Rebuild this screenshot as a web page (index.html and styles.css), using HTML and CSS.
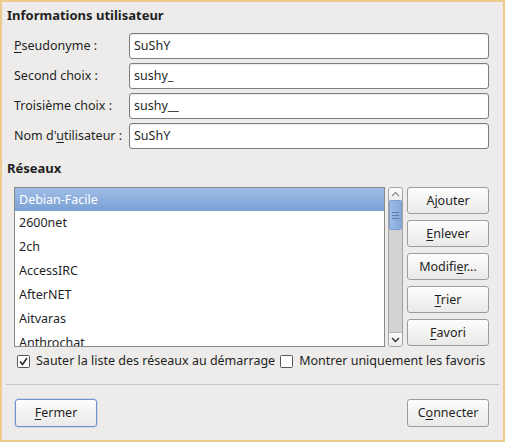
FILE: index.html
```html
<!DOCTYPE html>
<html lang="fr">
<head>
<meta charset="utf-8">
<title>Réseaux</title>
<link rel="stylesheet" href="styles.css">
</head>
<body>
<div class="window">
  <div class="heading">Informations utilisateur</div>
  <div class="form">
    <label class="lbl"><u>P</u>seudonyme :</label>
    <div class="input">SuShY</div>
    <label class="lbl">Second choix :</label>
    <div class="input">sushy_</div>
    <label class="lbl">Troisième choix :</label>
    <div class="input">sushy__</div>
    <label class="lbl">Nom d'<u>u</u>tilisateur :</label>
    <div class="input">SuShY</div>
  </div>

  <div class="heading heading2">Réseaux</div>
  <div class="networks">
    <div class="list">
      <div class="item selected">Debian-Facile</div>
      <div class="item">2600net</div>
      <div class="item">2ch</div>
      <div class="item">AccessIRC</div>
      <div class="item">AfterNET</div>
      <div class="item">Aitvaras</div>
      <div class="item">Anthrochat</div>
    </div>
    <div class="scrollbar">
      <div class="sb-btn sb-up">
        <svg width="9" height="6" viewBox="0 0 9 6"><path d="M1 5 L4.5 1.5 L8 5" fill="none" stroke="#8a8a8a" stroke-width="1.2"/></svg>
      </div>
      <div class="sb-track">
        <div class="sb-thumb">
          <span class="grip"></span><span class="grip"></span><span class="grip"></span>
        </div>
      </div>
      <div class="sb-btn sb-down">
        <svg width="9" height="6" viewBox="0 0 9 6"><path d="M1 1 L4.5 4.5 L8 1" fill="none" stroke="#333" stroke-width="1.4"/></svg>
      </div>
    </div>
    <div class="side-buttons">
      <div class="btn">A<u>j</u>outer</div>
      <div class="btn"><u>E</u>nlever</div>
      <div class="btn">Modifi<u>e</u>r...</div>
      <div class="btn"><u>T</u>rier</div>
      <div class="btn"><u>F</u>avori</div>
    </div>
  </div>

  <div class="checks">
    <span class="check">
      <svg width="13" height="13" viewBox="0 0 13 13"><rect x="0.5" y="0.5" width="12" height="12" rx="1" fill="#fff" stroke="#555"/><path d="M3 6.5 L5.5 9.5 L10 3" fill="none" stroke="#222" stroke-width="1.5"/></svg>
      Sauter la liste des réseaux au démarrage
    </span>
    <span class="check">
      <svg width="13" height="13" viewBox="0 0 13 13"><rect x="0.5" y="0.5" width="12" height="12" rx="1" fill="#fff" stroke="#555"/></svg>
      Montrer uniquement les favoris
    </span>
  </div>

  <div class="separator"></div>

  <div class="footer">
    <div class="btn btn-focus"><u>F</u>ermer</div>
    <div class="btn">C<u>o</u>nnecter</div>
  </div>
</div>
</body>
</html>
```

FILE: styles.css
```css
html, body {
  margin: 0;
  padding: 0;
}

body {
  font-family: "Noto Sans", "DejaVu Sans", sans-serif;
  font-size: 12.5px;
  color: #1f1f1f;
  background: #eccb8d;
}

.window {
  width: 505px;
  height: 442px;
  box-sizing: border-box;
  border: 2px solid #eccb8d;
  background: #edecea;
  padding: 4px 14px 0 5px;
  display: flex;
  flex-direction: column;
}

u {
  text-decoration: underline;
  text-underline-offset: 2px;
}

.heading {
  font-weight: bold;
  font-size: 13px;
  line-height: 18px;
  height: 18px;
}

.form {
  margin: 9px 0 0 7px;
  display: grid;
  grid-template-columns: 115px 1fr;
  grid-auto-rows: 26px;
  row-gap: 4px;
}

.lbl {
  line-height: 26px;
  white-space: nowrap;
}

.input {
  box-sizing: border-box;
  height: 26px;
  border: 1px solid #7d7d7d;
  border-radius: 3px;
  background: #fff;
  padding: 0 4px;
  line-height: 24px;
  box-shadow: inset 0 1px 1px rgba(0,0,0,0.08);
}

.heading2 {
  margin-top: 10px;
}

.networks {
  margin: 10px 0 0 7px;
  display: flex;
  height: 160px;
}

.list {
  flex: 1;
  box-sizing: border-box;
  border: 1px solid #8a8a8a;
  background: #fff;
  overflow: hidden;
}

.item {
  height: 24px;
  line-height: 24px;
  padding-left: 4px;
  white-space: nowrap;
}

.item.selected {
  height: 23px;
  line-height: 23px;
  background: linear-gradient(#a0bde6, #7ba0d5);
  color: #fff;
}

.scrollbar {
  width: 15px;
  margin-left: 3px;
  box-sizing: border-box;
  border: 1px solid #a5a5a5;
  border-radius: 3px;
  display: flex;
  flex-direction: column;
  overflow: hidden;
  background: #d3d3d3;
}

.sb-btn {
  display: flex;
  align-items: center;
  justify-content: center;
  background: linear-gradient(#fbfbfb, #ececec);
}

.sb-up {
  height: 12px;
}

.sb-down {
  height: 13px;
  border-top: 1px solid #b5b5b5;
}

.sb-track {
  flex: 1;
  background: #d3d3d3;
}

.sb-thumb {
  height: 30px;
  box-sizing: border-box;
  border: 1px solid #7c9fd0;
  border-radius: 2px;
  background: linear-gradient(to right, #9dbbe5, #86a9dc);
  display: flex;
  flex-direction: column;
  align-items: center;
  justify-content: center;
  gap: 2px;
}

.grip {
  width: 7px;
  height: 1px;
  background: #5e7fae;
}

.side-buttons {
  width: 82px;
  margin-left: 4px;
  display: flex;
  flex-direction: column;
  gap: 6px;
}

.btn {
  box-sizing: border-box;
  height: 27px;
  width: 82px;
  border: 1px solid #9c9c9c;
  border-radius: 3px;
  background: linear-gradient(#fdfdfd, #e9e9e8);
  text-align: center;
  line-height: 25px;
  white-space: nowrap;
}

.checks {
  margin: 5px 0 0 10px;
  display: flex;
  gap: 5px;
  line-height: 18px;
  white-space: nowrap;
}

.check {
  display: flex;
  align-items: center;
  gap: 6px;
}

.separator {
  height: 1px;
  background: #c6c5c3;
  margin: 14px -10px 0 -1px;
}

.footer {
  margin: 14px 0 0 8px;
  display: flex;
  justify-content: space-between;
}

.footer .btn {
  height: 28px;
  line-height: 26px;
}

.btn-focus {
  border-color: #6f95c8;
  box-shadow: 0 0 0 0.5px #a9c1e3;
}
```
